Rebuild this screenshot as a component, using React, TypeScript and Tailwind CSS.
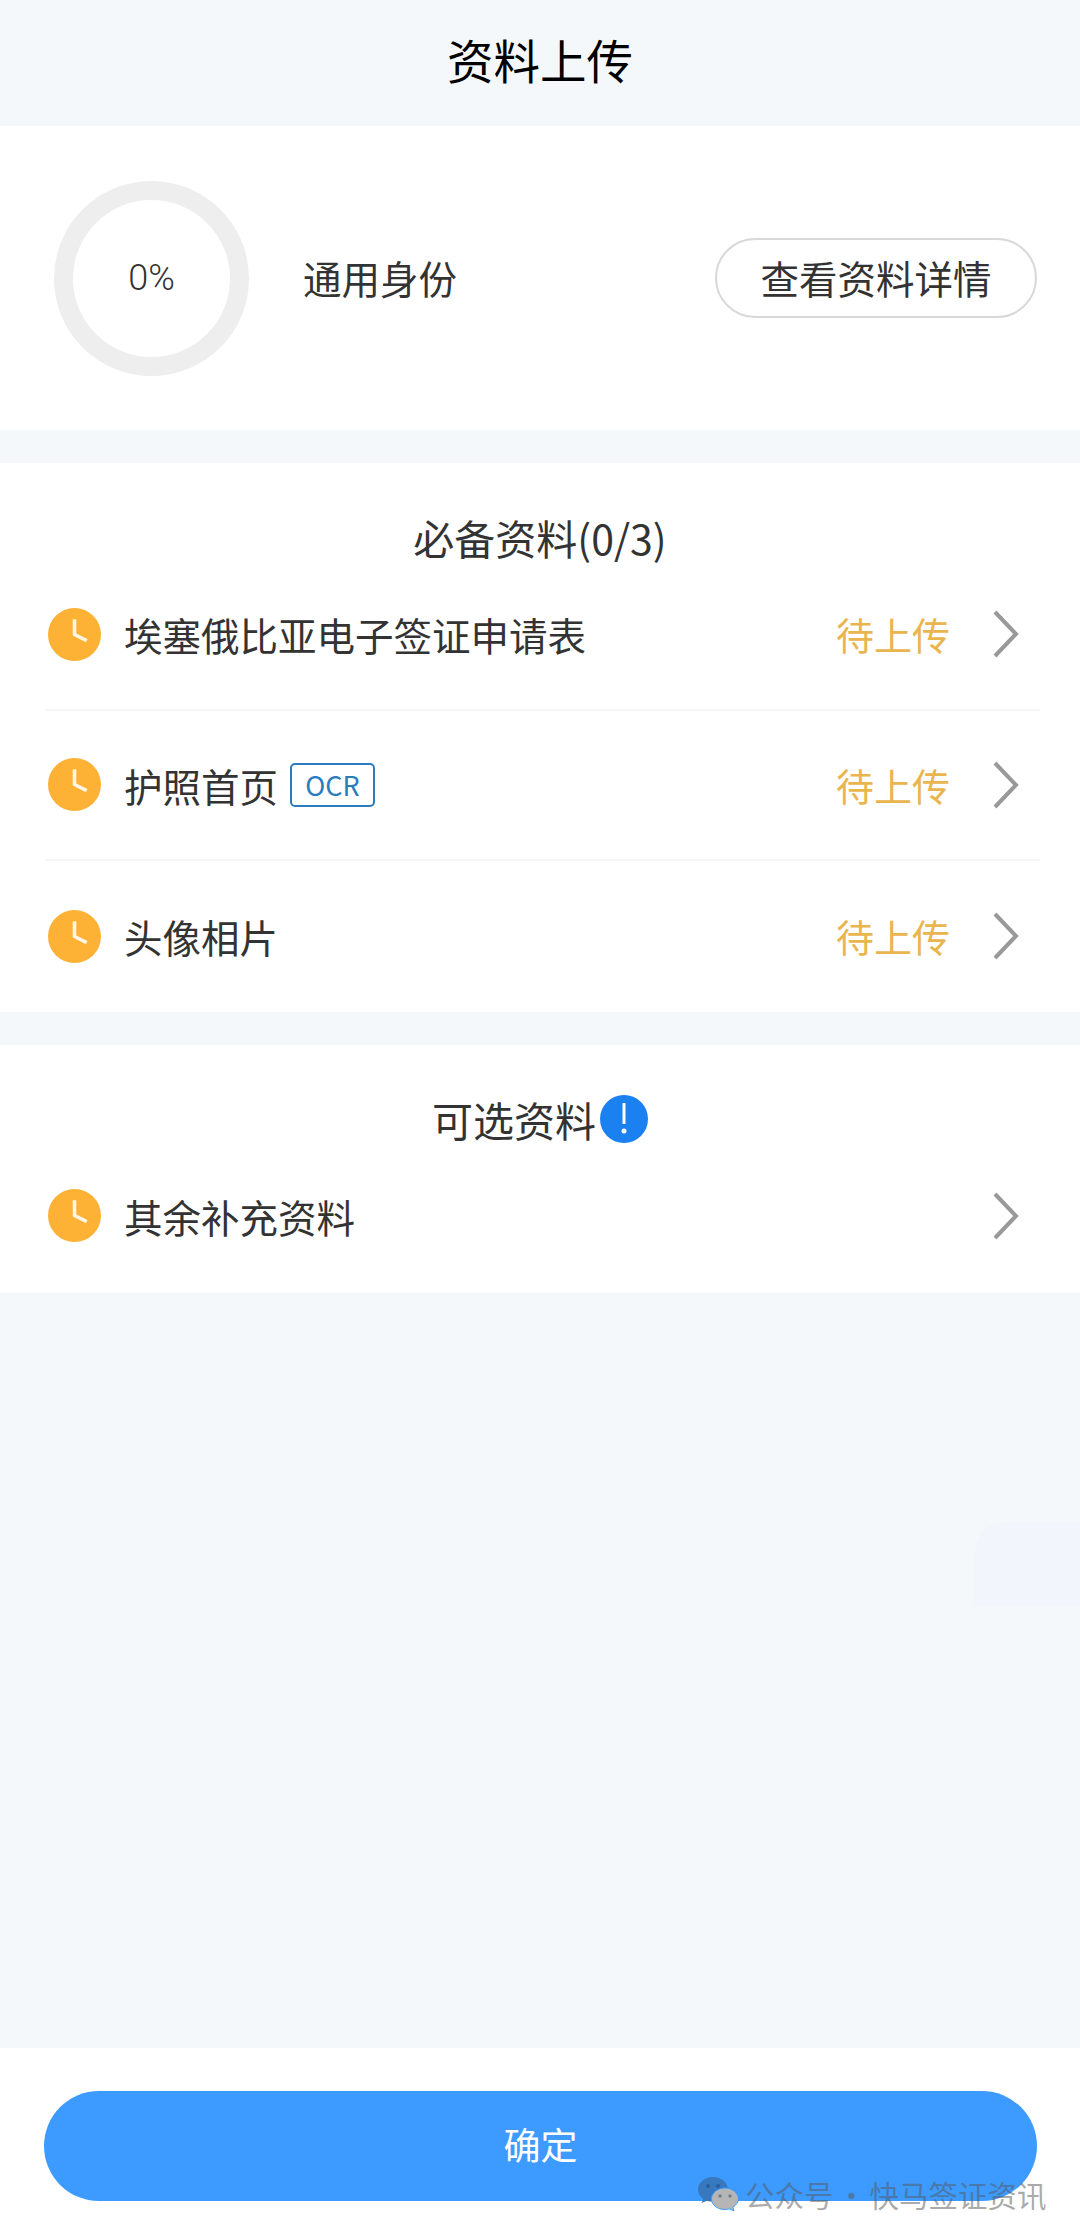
const FONT = "font-['Noto_Sans_CJK_SC','Noto_Sans',sans-serif]";

function ClockIcon() {
  return (
    <svg width="53" height="53" viewBox="0 0 52 52" className="shrink-0 ml-[3px]">
      <circle cx="26" cy="26" r="26" fill="#fdb235" />
      <path d="M26 11V26L38 32" fill="none" stroke="#fff6e4" strokeWidth="3.5" strokeLinejoin="round" />
    </svg>
  );
}

function Chevron() {
  return (
    <svg width="28" height="50" viewBox="0 0 28 50" className="shrink-0">
      <path d="M3 3L24 25L3 47" fill="none" stroke="#999999" strokeWidth="4" />
    </svg>
  );
}

function Row({ label, status, ocr, divider }: { label: string; status?: boolean; ocr?: boolean; divider?: boolean }) {
  return (
    <div className={`ml-[45px] mr-[40px] h-[150.5px] flex items-center ${divider ? "border-b-2 border-[#f5f5f5]" : ""}`}>
      <ClockIcon />
      <span className="ml-[23px] text-[38.5px] leading-[50px] text-[#333333]">{label}</span>
      {ocr && (
        <span className="ml-[12px] w-[85px] h-[44px] flex items-center justify-center border-2 border-[#2b7cbe] rounded-[5px] text-[27px] text-[#2b7cbe]">
          OCR
        </span>
      )}
      <div className="flex-1" />
      {status && <span className="text-[38px] leading-[50px] text-[#e9b54e] mr-[42px]">待上传</span>}
      <span className="mr-[20px] flex">
        <Chevron />
      </span>
    </div>
  );
}

function WechatMark() {
  return (
    <svg width="42" height="36" viewBox="0 0 42 36" className="shrink-0">
      <path d="M16 1C7.500 1 1 6.600 1 13.500C1 17.500 3.200 20.800 6.500 23L4.500 27L10 24.800C12 25.500 14 25.800 16 25.800C24.500 25.800 31 20.200 31 13.500C31 6.600 24.500 1 16 1Z" fill="#3878be" />
      <circle cx="11" cy="10" r="2" fill="#2a5f9c" />
      <circle cx="21" cy="10" r="2" fill="#2a5f9c" />
      <path d="M28 12C20.500 12 14.500 17 14.500 23C14.500 29 20.500 33.500 28 33.500C29.500 33.500 31 33.300 32.500 32.800L37 35L35.800 31.200C39 29 41.500 26.300 41.500 23C41.500 17 35.500 12 28 12Z" fill="#b5b5b5" stroke="#3d9bff" strokeWidth="1" />
      <circle cx="23" cy="20" r="1.700" fill="#6f7f90" />
      <circle cx="33" cy="20" r="1.700" fill="#6f7f90" />
    </svg>
  );
}

export default function App() {
  return (
    <div className={`relative w-[1080px] h-[2238px] bg-[#f4f8fb] flex flex-col overflow-hidden ${FONT}`}>
      <div className="h-[126px] flex items-center justify-center text-[46.5px] text-black pb-[9px]">资料上传</div>

      <div className="h-[304px] bg-white flex items-center pl-[54px] pr-[43px]">
        <div className="w-[195px] h-[195px] rounded-full border-[19px] border-[#eeeeee] flex items-center justify-center shrink-0">
          <span className="font-['Roboto',sans-serif] font-light text-[36px] text-[#333333]">0%</span>
        </div>
        <span className="ml-[54px] text-[38.5px] text-[#333333]">通用身份</span>
        <div className="flex-1" />
        <div className="w-[322px] h-[80px] rounded-full border-2 border-[#d8d8d8] flex items-center justify-center text-[38.5px] text-[#333333]">
          查看资料详情
        </div>
      </div>

      <div className="mt-[33px] bg-white">
        <div className="h-[97px] pt-[54px] text-center text-[41px] leading-[41px] text-[#333333]">必备资料(0/3)</div>
        <Row label="埃塞俄比亚电子签证申请表" status divider />
        <Row label="护照首页" status ocr divider />
        <Row label="头像相片" status />
      </div>

      <div className="mt-[33px] bg-white pb-[2px]">
        <div className="h-[96px] pt-[53px] flex justify-center items-center text-[41px] leading-[41px] text-[#333333]">
          <span>可选资料</span>
          <span className="ml-[4px] w-[48px] h-[48px] rounded-full bg-[#1b80f0] flex items-center justify-center text-white">
            <svg width="8" height="34" viewBox="0 0 8 34">
              <path d="M4 1V22" stroke="#ffffff" strokeWidth="3" />
              <circle cx="4" cy="29" r="2.500" fill="#ffffff" />
            </svg>
          </span>
        </div>
        <Row label="其余补充资料" />
      </div>

      <div className="flex-1" />

      <div className="h-[190px] bg-white pl-[44px] pr-[43px] pt-[43px]">
        <div className="h-[110px] rounded-full bg-[#3d9bff] flex items-center justify-center text-white text-[37px] pb-[2px]">确定</div>
      </div>

      <div className="absolute left-[975px] top-[1522px] w-[105px] h-[84px] rounded-tl-[30px] bg-[#f2f6fc]" />

      <div className="absolute left-[697px] top-[2176px] flex items-center text-[29.5px] leading-[36px] whitespace-nowrap text-[#55555580]">
        <WechatMark />
        <span className="ml-[6px]">公众号</span>
        <span className="w-[36px] text-center">·</span>
        <span>快马签证资讯</span>
      </div>
    </div>
  );
}
